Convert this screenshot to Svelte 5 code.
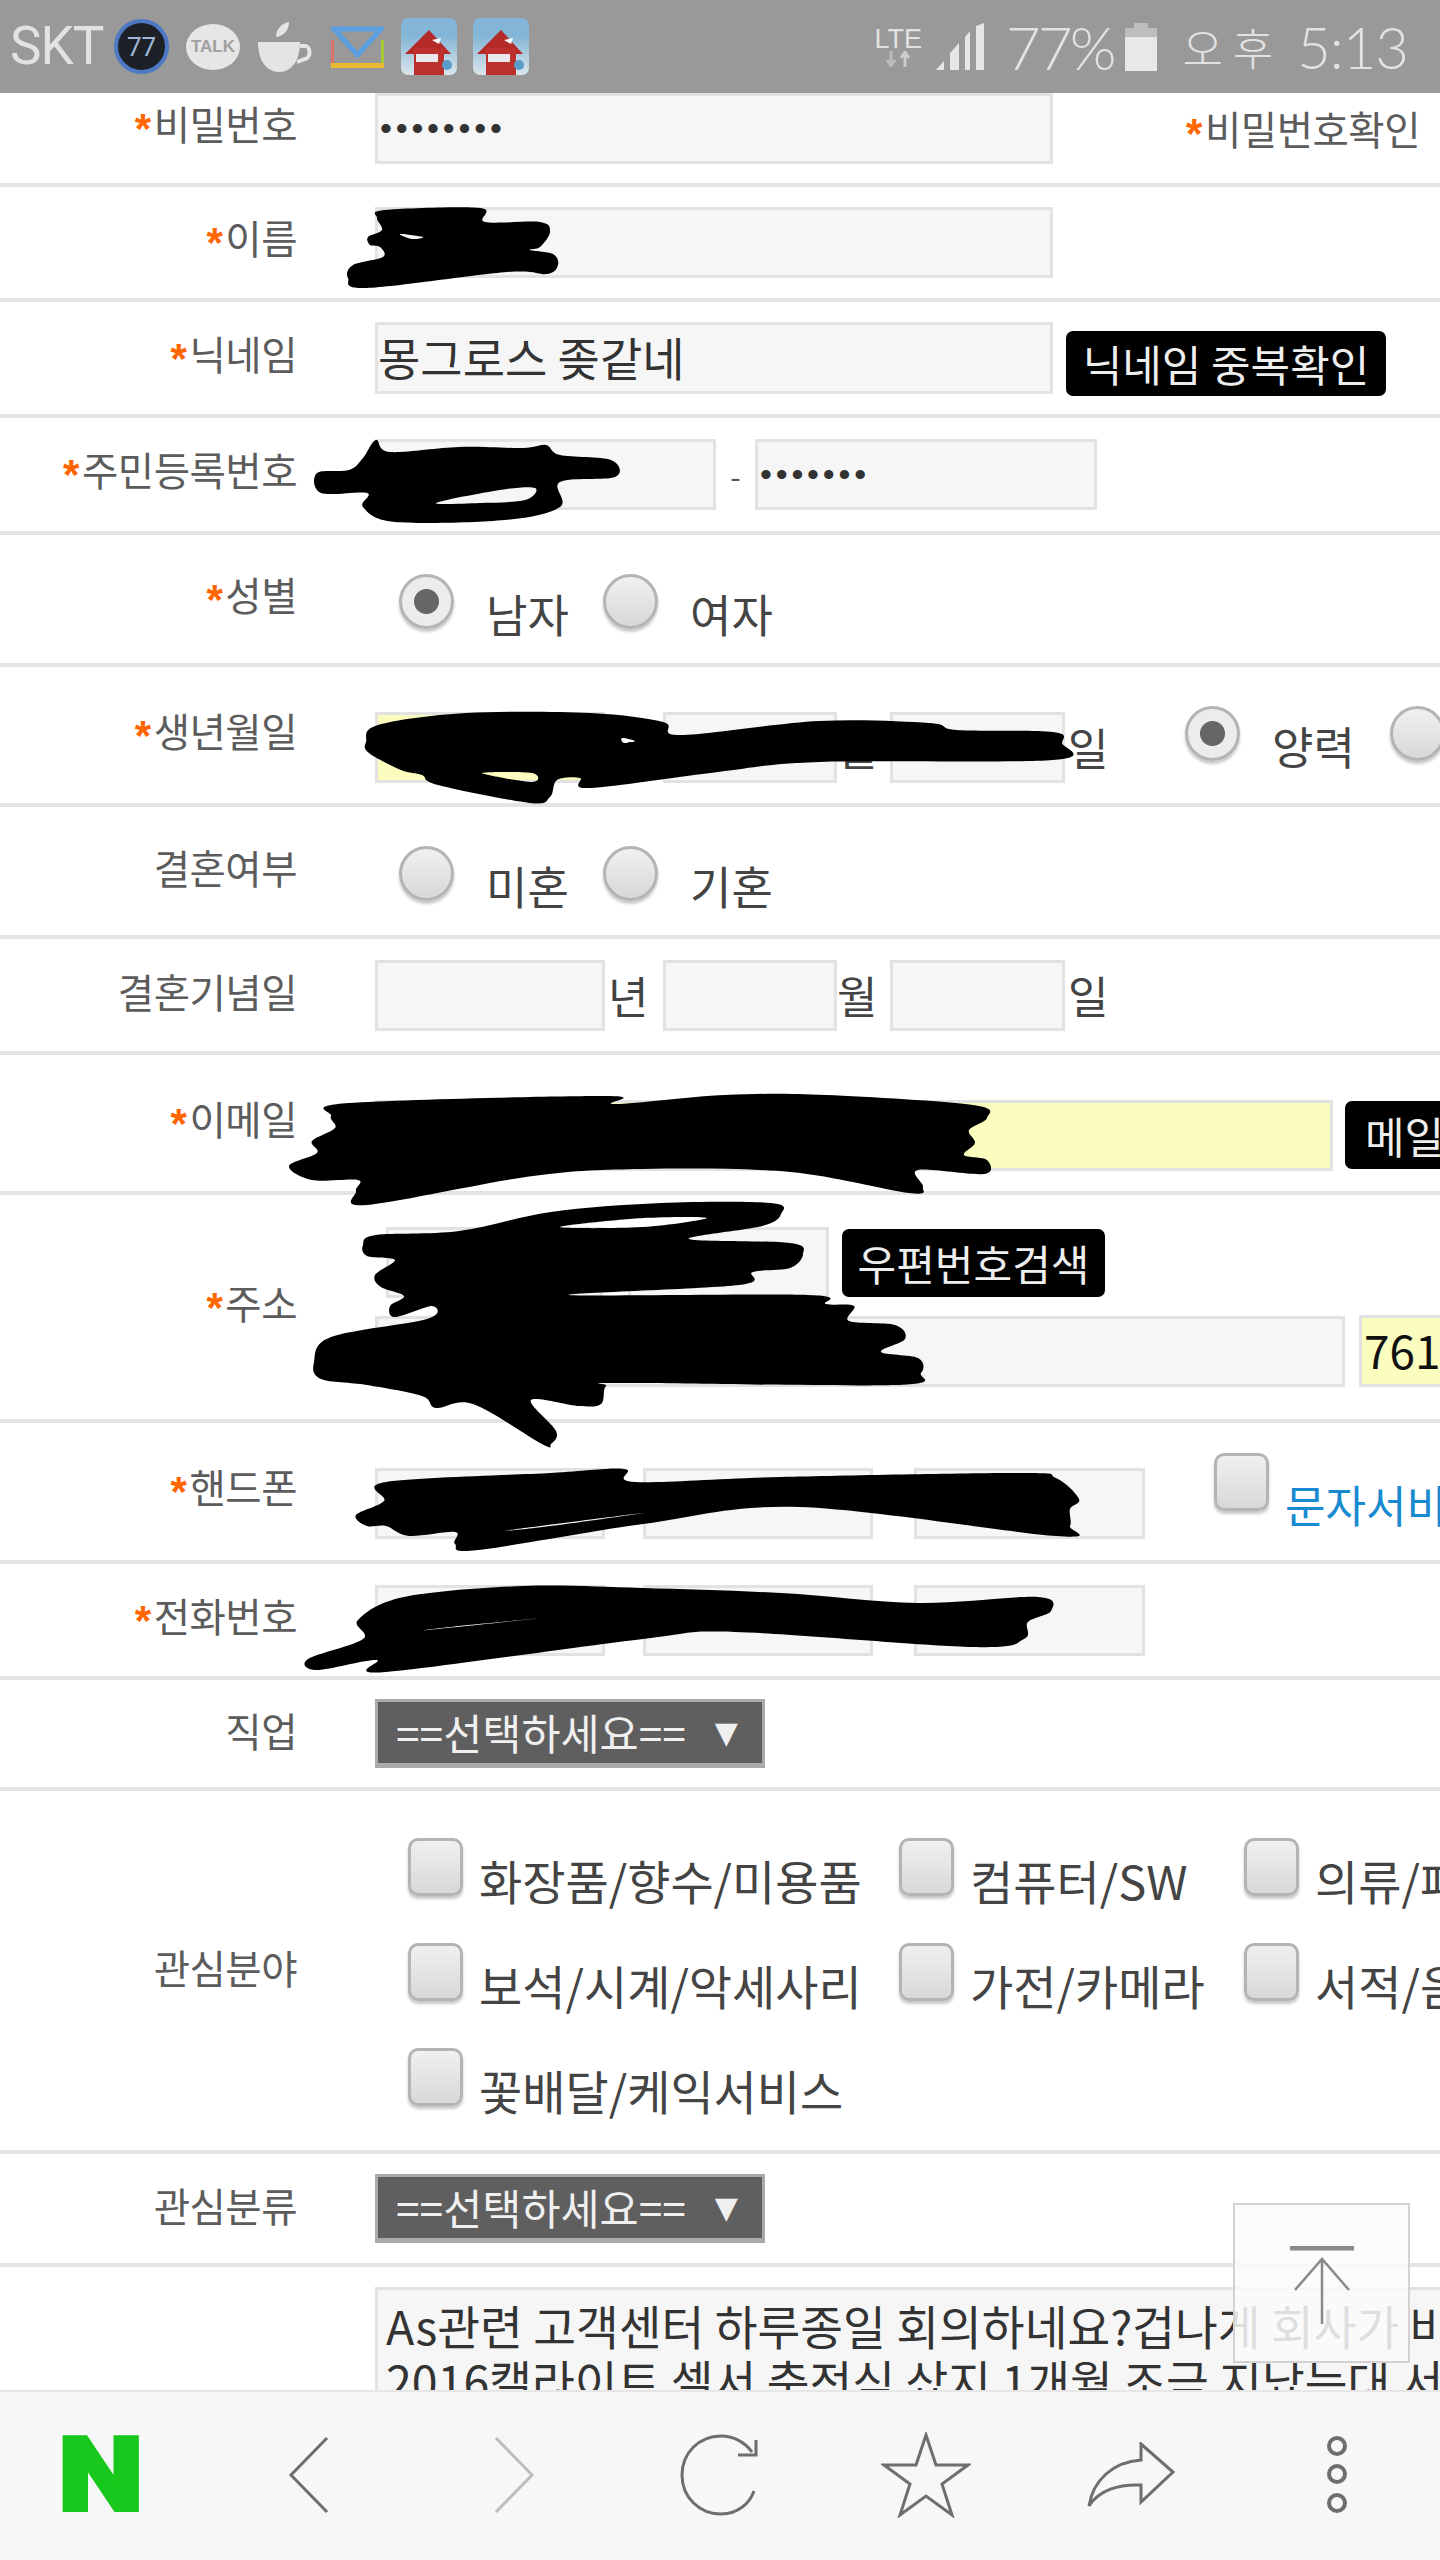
<script>
  // signup form screenshot on a phone browser, page scrolled down a little
  const interests = [
    '화장품/향수/미용품', '컴퓨터/SW', '의류/패션',
    '보석/시계/악세사리', '가전/카메라', '서적/음반',
    '꽃배달/케익서비스'
  ];

  // smooth closed outline through the points (catmull-rom to bezier)
  function outline(p) {
    const n = p.length / 2;
    const at = (i) => [p[((i + n) % n) * 2], p[((i + n) % n) * 2 + 1]];
    let d = `M${at(0).join(' ')}`;
    for (let i = 0; i < n; i++) {
      const [a, b, c, e] = [at(i - 1), at(i), at(i + 1), at(i + 2)];
      const c1 = [b[0] + (c[0] - a[0]) / 6, b[1] + (c[1] - a[1]) / 6];
      const c2 = [c[0] - (e[0] - b[0]) / 6, c[1] - (e[1] - b[1]) / 6];
      d += `C${c1[0]} ${c1[1]} ${c2[0]} ${c2[1]} ${c[0]} ${c[1]}`;
    }
    return d + 'Z';
  }

  // marker scribbles drawn over the private fields, traced as [outline, ...holes]
  const scribbles = [
    // name
    [[377,218,385,210,480,208,485,222,540,222,550,232,540,247,530,250,553,254,558,265,547,274,507,272,367,288,348,278,353,265,383,257,380,247,370,245,368,237,382,230],
     [400,234,423,237,412,239]],
    // resident number
    [[317,473,349,470,363,458,376,440,390,452,459,447,523,448,546,445,560,455,611,460,615,477,560,482,560,507,505,520,395,522,363,507,367,493,321,493],
     [436,503,500,490,535,488,525,500,480,503]],
    // birthday
    [[366,742,378,725,466,713,590,713,663,722,681,735,819,721,929,723,957,730,1053,732,1062,743,1053,760,819,762,718,772,590,788,580,778,557,780,550,797,530,803,438,785,422,775,401,770,369,753],
     [482,773,532,782,532,773],
     [622,738,635,741,624,743]],
    // email
    [[331,1116,349,1103,606,1096,615,1104,725,1095,826,1095,973,1105,987,1118,969,1130,975,1143,964,1155,987,1160,984,1174,918,1170,923,1187,909,1193,790,1172,643,1169,533,1176,367,1205,356,1191,358,1180,312,1180,289,1166,317,1153,312,1141,335,1128]],
    // address
    [[363,1245,376,1235,459,1231,551,1212,661,1203,771,1203,781,1214,762,1226,689,1239,790,1243,803,1254,790,1268,753,1272,739,1285,569,1295,808,1295,826,1304,854,1306,849,1321,895,1325,905,1339,881,1352,918,1358,921,1373,895,1385,624,1383,606,1386,601,1404,579,1406,531,1400,556,1431,551,1444,542,1444,473,1404,436,1408,422,1396,367,1385,321,1379,314,1362,331,1337,427,1319,432,1306,395,1317,390,1306,404,1296,381,1287,375,1275,395,1260,367,1256],
     [560,1227,643,1218,707,1218,643,1227]],
    // mobile
    [[356,1515,384,1501,386,1482,551,1473,624,1469,635,1482,781,1477,1019,1473,1056,1478,1079,1499,1070,1509,1070,1526,1056,1536,799,1507,643,1524,478,1550,455,1544,455,1532,409,1536,386,1526,367,1526],
     [510,1530,643,1513,551,1526]],
    // phone
    [[308,1659,363,1639,358,1620,404,1597,523,1586,643,1588,781,1593,918,1603,1038,1597,1051,1611,1028,1622,1024,1639,973,1647,735,1632,643,1639,386,1672,376,1660,317,1670],
     [427,1630,542,1618,459,1626]]
  ].map((parts) => parts.map(outline).join(''));
</script>

{#snippet label(text, req = true)}
  <span class="label">{#if req}<i>*</i>{/if}{text}</span>
{/snippet}

{#snippet choice(text, kind = 'radio', on = false)}
  <label class="choice">
    <input type={kind} class={kind} checked={on} readonly />
    {#if text}<span>{text}</span>{/if}
  </label>
{/snippet}

<div class="phone">
  <header class="status">
    <span class="skt">SKT</span>
    <span class="badge">77</span>
    <span class="talk">TALK</span>
    <svg class="cup" viewBox="0 0 54 50" width="54" height="50">
      <path d="M0 20H42C42 38 34 50 21 50S0 38 0 20Z" fill="#e4e4e4" />
      <path d="M18 15C18 7 24 1 31 0C31 8 26 14 18 15Z" fill="#e4e4e4" />
      <path d="M42 24H47C53 24 53 36 47 37L39 40" fill="none" stroke="#e4e4e4" stroke-width="4" />
    </svg>
    <svg class="mail" viewBox="0 0 53 42" width="53" height="42">
      <path d="M3 3H50L26.5 29Z" fill="none" stroke="#5b9fe0" stroke-width="5" />
      <path d="M1.5 14V38" stroke="#e0706c" stroke-width="3" />
      <path d="M51.5 14V38" stroke="#a8c838" stroke-width="3" />
      <path d="M0 39.5H53" stroke="#e8bc30" stroke-width="5" />
    </svg>
    {#each [0, 1] as n}
      <svg class="app" viewBox="0 0 56 57" width="56" height="57">
        <defs>
          <linearGradient id="sky{n}" x1="0" y1="0" x2="0" y2="1">
            <stop offset="0.3" stop-color="#82b5d6" />
            <stop offset="1" stop-color="#dbe5ea" />
          </linearGradient>
        </defs>
        <rect width="56" height="57" rx="7" fill="url(#sky{n})" />
        <path d="M28 12L50 36H4Z" fill="#b32a28" />
        <rect x="13" y="30" width="30" height="27" fill="#bb302c" />
        <rect x="15" y="36" width="22" height="8" fill="#e8e8ee" />
        <path d="M31 22L40 20L38 26Z" fill="#fff" />
        <circle cx="46" cy="47" r="5" fill="#5a9ccc" />
      </svg>
    {/each}
    <span class="spacer"></span>
    <span class="lte">LTE<svg viewBox="0 0 28 16" width="28" height="16"><path d="M7 0V14M3 9L7 15L11 9" fill="none" stroke="#bbb" stroke-width="3" /><path d="M21 16V2M17 7L21 1L25 7" fill="none" stroke="#ccc" stroke-width="3" /></svg></span>
    <svg class="bars" viewBox="0 0 48 47" width="48" height="47">
      <path d="M0 47L8 38V47ZM14 47V30L23 20V47ZM29 47V14L34 8V47ZM40 47V3L48 0V47Z" fill="#e6e6e6" />
    </svg>
    <span class="pct">77%</span>
    <svg class="batt" viewBox="0 0 32 48" width="32" height="48">
      <path d="M9 0H23V5H32V14H0V5H9Z" fill="#bdbdbd" />
      <rect y="14" width="32" height="34" fill="#e8e8e8" />
    </svg>
    <span class="ampm">오 후</span>
    <span class="clock">5:13</span>
  </header>

  <main class="page">
    <div class="form">
      <section class="row first">
        {@render label('비밀번호')}
        <input class="box w678 pw" type="password" value="12345678" readonly />
        <span class="label right"><i>*</i>비밀번호확인</span>
      </section>

      <section class="row h115">
        {@render label('이름')}
        <input class="box w678" readonly />
      </section>

      <section class="row h116">
        {@render label('닉네임')}
        <input class="box w678 tall" value="몽그로스 좆같네" readonly />
        <button class="black nick">닉네임 중복확인</button>
      </section>

      <section class="row h117">
        {@render label('주민등록번호')}
        <input class="box w341" readonly />
        <span class="dash">-</span>
        <input class="box w342 pw" type="password" value="1234567" readonly />
      </section>

      <section class="row h132">
        {@render label('성별')}
        <div class="choices">
          {@render choice('남자', 'radio', true)}
          {@render choice('여자')}
        </div>
      </section>

      <section class="row h140">
        {@render label('생년월일')}
        <div class="low">
          <input class="box w230 yellow" readonly />
          <span class="unit">년</span>
          <input class="box w174" readonly />
          <span class="unit short">월</span>
          <input class="box w175" readonly />
          <span class="unit">일</span>
        </div>
        <div class="choices birth">
          {@render choice('양력', 'radio', true)}
          {@render choice('')}
        </div>
      </section>

      <section class="row h132">
        {@render label('결혼여부', false)}
        <div class="choices">
          {@render choice('미혼')}
          {@render choice('기혼')}
        </div>
      </section>

      <section class="row h116">
        {@render label('결혼기념일', false)}
        <input class="box w230" readonly />
        <span class="unit">년</span>
        <input class="box w174" readonly />
        <span class="unit short">월</span>
        <input class="box w175" readonly />
        <span class="unit">일</span>
      </section>

      <section class="row h140">
        {@render label('이메일')}
        <div class="low">
          <input class="box w958 yellow" readonly />
          <button class="black mailcheck">메일중복확인</button>
        </div>
      </section>

      <section class="row h228">
        {@render label('주소')}
        <div class="address">
          <div class="line zip">
            <input class="box w217" readonly />
            <span class="unit narrow">-</span>
            <input class="box w201" readonly />
            <button class="black zipbtn">우편번호검색</button>
          </div>
          <div class="line">
            <input class="box w970" readonly />
            <input class="box w300 yellow tall" value="761" readonly />
          </div>
        </div>
      </section>

      <section class="row h141">
        {@render label('핸드폰')}
        <div class="low">
          <input class="box w230" readonly />
          <input class="box w230 gap38" readonly />
          <input class="box w231 gap41" readonly />
          <label class="choice sms">
            <input type="checkbox" class="checkbox" readonly />
            <span>문자서비스 수신동의</span>
          </label>
        </div>
      </section>

      <section class="row h116">
        {@render label('전화번호')}
        <input class="box w230" readonly />
        <input class="box w230 gap38" readonly />
        <input class="box w231 gap41" readonly />
      </section>

      <section class="row h111">
        {@render label('직업', false)}
        <div class="select">==선택하세요==<span>▼</span></div>
      </section>

      <section class="row h363">
        {@render label('관심분야', false)}
        <div class="interests">
          {#each interests as item}
            {@render choice(item, 'checkbox')}
          {/each}
        </div>
      </section>

      <section class="row h113">
        {@render label('관심분류', false)}
        <div class="select">==선택하세요==<span>▼</span></div>
      </section>

      <section class="memo-row">
        <div class="memo">
          <p>As관련 고객센터 하루종일 회의하네요?겁나게 회사가 바쁜가</p>
          <p>2016캘라이트 셀서 충전식 샀지 1개월 조금 지났는대 서비스</p>
        </div>
      </section>
    </div>

    <svg class="scribble" viewBox="0 0 1440 2560" width="1440" height="2560">
      {#each scribbles as d}
        <path {d} fill="#000" fill-rule="evenodd" />
      {/each}
    </svg>

    <button class="totop" aria-label="맨 위로">
      <svg viewBox="0 0 64 78" width="64" height="78">
        <path d="M0 2H64" stroke="#8a8a8a" stroke-width="5" />
        <path d="M32 78V14M5 44L32 13L59 44" fill="none" stroke="#8a8a8a" stroke-width="2.5" />
      </svg>
    </button>
  </main>

  <nav class="toolbar">
    <span class="naver">N</span>
    <svg viewBox="0 0 42 78" width="42" height="78"><path d="M39 2L3 39L39 76" fill="none" stroke="#6e6e6e" stroke-width="3" /></svg>
    <svg viewBox="0 0 42 78" width="42" height="78"><path d="M3 2L39 39L3 76" fill="none" stroke="#bdbdbd" stroke-width="3" /></svg>
    <svg viewBox="0 0 80 82" width="80" height="82"><path d="M72 18C64 7 52 2 41 2C19 2 2 19 2 41S19 80 41 80C58 80 70 69 74 57" fill="none" stroke="#6e6e6e" stroke-width="3" /><path d="M76 6V21H58" fill="none" stroke="#6e6e6e" stroke-width="3" /></svg>
    <svg viewBox="0 0 90 86" width="90" height="86"><path d="M45 3L55 33H87L61 52L71 83L45 64L19 83L29 52L3 33H35Z" fill="none" stroke="#6e6e6e" stroke-width="3" stroke-linejoin="miter" /></svg>
    <svg viewBox="0 0 88 66" width="88" height="66"><path d="M54 2L86 30L54 60V43C32 42 12 48 2 64C6 38 26 20 54 18Z" fill="none" stroke="#6e6e6e" stroke-width="3" /></svg>
    <svg viewBox="0 0 22 78" width="22" height="78"><g fill="none" stroke="#6e6e6e" stroke-width="4"><ellipse cx="11" cy="10" rx="8" ry="8" /><ellipse cx="11" cy="38" rx="8" ry="8" /><ellipse cx="11" cy="67" rx="8" ry="8" /></g></svg>
  </nav>
</div>

<style>
  :global(body) {
    margin: 0;
    background: #fff;
  }

  .phone {
    position: relative;
    display: flex;
    flex-direction: column;
    width: 1440px;
    height: 2560px;
    overflow: hidden;
    font-family: "Noto Sans CJK KR", "Noto Sans", sans-serif;
  }

  /* status bar */
  .status {
    position: relative;
    z-index: 3;
    flex: none;
    display: flex;
    align-items: center;
    height: 93px;
    padding: 0 32px 0 10px;
    box-sizing: border-box;
    background: #999;
    color: #e2e2e2;
  }
  .skt {
    font: 53px/1 Roboto, sans-serif;
    width: 104px;
    letter-spacing: -1px;
  }
  .badge {
    display: grid;
    place-items: center;
    box-sizing: border-box;
    width: 55px;
    height: 55px;
    border-radius: 50%;
    border: 4px solid #4d78c4;
    background: #1d2026;
    color: #9db8d8;
    font: 26px/1 Roboto, sans-serif;
  }
  .talk {
    display: grid;
    place-items: center;
    width: 54px;
    height: 46px;
    margin: 0 18px 0 17px;
    border-radius: 50%;
    background: #e6e6e6;
    color: #a0a0a0;
    font: 600 17px/1 "Liberation Sans", sans-serif;
  }
  .cup {
    margin-right: 19px;
  }
  .mail {
    margin-right: 17px;
  }
  .app {
    margin-right: 16px;
  }
  .spacer {
    flex: 1;
  }
  .lte {
    display: flex;
    flex-direction: column;
    align-items: center;
    font: 27px/24px "Liberation Sans", sans-serif;
    margin-right: 14px;
  }
  .bars {
    margin-right: 22px;
  }
  .pct {
    font: 300 60px/1 Lato, sans-serif;
    margin-right: 12px;
    letter-spacing: -3px;
  }
  .batt {
    margin-right: 25px;
  }
  .ampm {
    font-size: 44px;
    font-weight: 300;
    line-height: 1;
    margin-right: 24px;
  }
  .clock {
    font: 300 58px/1 Lato, sans-serif;
    letter-spacing: -1px;
  }

  /* form */
  .page {
    position: relative;
    flex: 1;
    min-height: 0;
    overflow: hidden;
  }
  .form {
    margin-top: -19px;
  }
  .row {
    display: flex;
    align-items: center;
    box-sizing: border-box;
    border-bottom: 4px solid #e4e4e4;
    color: #444;
  }
  .first { height: 113px; }
  .h111 { height: 111px; }
  .h113 { height: 113px; }
  .h115 { height: 115px; }
  .h116 { height: 116px; }
  .h117 { height: 117px; }
  .h132 { height: 132px; }
  .h140 { height: 140px; }
  .h141 { height: 141px; }
  .h228 { height: 228px; }
  .h363 { height: 363px; }

  .label {
    flex: none;
    width: 297px;
    margin: -8px 78px 0 0;
    text-align: right;
    font-size: 39.5px;
    line-height: 48px;
    letter-spacing: -0.5px;
    color: #5c5c5c;
    white-space: nowrap;
  }
  .label i {
    color: #f60;
    font: bold 42px/1 "Liberation Sans", sans-serif;
    margin-right: 3px;
    vertical-align: -3px;
  }
  .label.right {
    width: auto;
    margin: 2px 0 0 auto;
    padding-right: 20px;
  }

  .box {
    flex: none;
    box-sizing: border-box;
    height: 71px;
    margin: 0;
    padding: 0 0 4px;
    border: 3px solid #e2e2e2;
    border-radius: 0;
    background: #f6f6f6;
    color: #333;
    font: 46px "Noto Sans CJK KR", sans-serif;
    outline: none;
  }
  .pw {
    padding: 0 2px;
    font: 34px "Liberation Sans", sans-serif;
    letter-spacing: 3.8px;
    color: #333;
  }
  .tall {
    height: 72px;
  }
  .yellow {
    background: #fbfdbf;
  }
  .w174 { width: 174px; }
  .w175 { width: 175px; }
  .w201 { width: 201px; }
  .w217 { width: 217px; }
  .w230 { width: 230px; }
  .w231 { width: 231px; }
  .w300 { width: 300px; }
  .w341 { width: 341px; }
  .w342 { width: 342px; }
  .w678 { width: 678px; }
  .w958 { width: 958px; }
  .w970 { width: 970px; }
  .gap38 { margin-left: 38px; }
  .gap41 { margin-left: 41px; }

  .dash {
    width: 39px;
    text-align: center;
    font-size: 30px;
    color: #555;
  }
  .unit {
    flex: none;
    width: 58px;
    text-align: left;
    padding-left: 3px;
    box-sizing: border-box;
    font-size: 44px;
    line-height: 1;
    color: #444;
  }
  .unit.short {
    width: 53px;
    padding-left: 0;
  }
  .unit.narrow {
    width: 25px;
    padding: 0;
  }

  .low {
    display: flex;
    align-items: center;
    flex: none;
    padding-top: 24px;
  }

  .black {
    flex: none;
    box-sizing: border-box;
    margin: 0;
    padding: 0;
    border: 0;
    border-radius: 7px;
    background: #000;
    color: #eee;
    font: 43px/1 "Noto Sans CJK KR", sans-serif;
    white-space: nowrap;
  }
  .nick {
    width: 320px;
    height: 65px;
    margin: 11px 0 0 13px;
  }
  .mailcheck {
    width: 320px;
    height: 68px;
    margin: 0 0 0 12px;
    padding-left: 20px;
    text-align: left;
  }
  .zipbtn {
    width: 263px;
    height: 68px;
    margin-left: 13px;
    font-size: 42px;
  }

  .address {
    display: flex;
    flex-direction: column;
    flex: none;
    gap: 17px;
  }
  .line {
    display: flex;
    align-items: center;
  }
  .line .w300 {
    margin-left: 14px;
    padding-left: 2px;
    color: #111;
  }
  .zip {
    padding-left: 11px;
  }

  /* radios and checkboxes */
  .choices {
    display: flex;
    margin-top: 10px;
    flex: none;
  }
  .birth {
    margin: 2px 0 0 62px;
  }
  .choice {
    flex: none;
    display: flex;
    align-items: flex-start;
    white-space: nowrap;
    font-size: 45px;
    line-height: 42px;
    color: #444;
  }
  .choice span {
    margin-top: 19px;
  }
  .radio,
  .checkbox {
    appearance: none;
    flex: none;
    box-sizing: border-box;
    margin: 0;
    border: 3px solid #b4b4b4;
    background: linear-gradient(#f0f0f0, #d8d8d8);
    box-shadow: 0 3px 3px rgba(0, 0, 0, 0.22);
  }
  .radio {
    width: 55px;
    height: 55px;
    margin: 0 32px 0 0;
    border-radius: 50%;
  }
  .choices .choice {
    width: 204px;
    padding-left: 24px;
    box-sizing: border-box;
  }
  .birth .choice {
    width: 205px;
    padding-left: 0;
  }
  .radio:checked {
    background: radial-gradient(circle, #666 0 12px, #ececec 13px 100%);
  }
  .checkbox {
    width: 55px;
    height: 58px;
    margin-right: 16px;
    border-radius: 10px;
  }

  .sms {
    margin: -30px 0 0 69px;
    font-size: 44px;
    color: #1a8ad0;
  }
  .sms span {
    margin-top: 30px;
  }

  .interests {
    flex: none;
    display: grid;
    grid-template-columns: 491px 345px 320px;
    row-gap: 47px;
    margin-left: 33px;
    margin-top: 2px;
  }
  .interests .choice {
    height: 58px;
    font-size: 47px;
  }
  .interests .choice span {
    margin-top: 21px;
  }

  .select {
    flex: none;
    display: flex;
    align-items: center;
    box-sizing: border-box;
    width: 390px;
    height: 69px;
    padding-left: 18px;
    border: 3px solid #aaa;
    border-bottom-width: 5px;
    background: #5f5f5f;
    color: #f0f0f0;
    font-size: 42.5px;
    line-height: 1;
    white-space: nowrap;
  }
  .select span {
    margin-left: 29px;
    font: 30px/1 "DejaVu Sans", sans-serif;
  }

  .memo-row {
    padding: 20px 0 0 375px;
  }
  .memo {
    box-sizing: border-box;
    width: 1100px;
    height: 300px;
    padding: 7px 8px;
    border: 3px solid #e2e2e2;
    background: #f6f6f6;
    color: #333;
    font-size: 46.5px;
    line-height: 55px;
  }
  .memo p {
    margin: 0;
    white-space: nowrap;
  }

  /* overlays */
  .scribble {
    position: absolute;
    left: 0;
    top: -93px;
    pointer-events: none;
  }
  .totop {
    position: absolute;
    left: 1233px;
    top: 2110px;
    box-sizing: border-box;
    width: 177px;
    height: 160px;
    padding: 41px 0 0;
    display: flex;
    justify-content: center;
    align-items: flex-start;
    border: 2px solid #d2d2d2;
    background: rgba(250, 250, 250, 0.86);
  }

  /* bottom toolbar */
  .toolbar {
    position: relative;
    z-index: 3;
    flex: none;
    display: grid;
    grid-template-columns: repeat(7, 1fr);
    justify-items: center;
    align-items: center;
    box-sizing: border-box;
    height: 170px;
    padding-bottom: 3px;
    border-top: 2px solid #e6e6e6;
    background: #f7f7f7;
  }
  .naver {
    color: #18c81c;
    font: 900 102px/1 Roboto, sans-serif;
    -webkit-text-stroke: 4px #18c81c;
    transform: translateX(-2px) scaleX(1.18);
  }
</style>
